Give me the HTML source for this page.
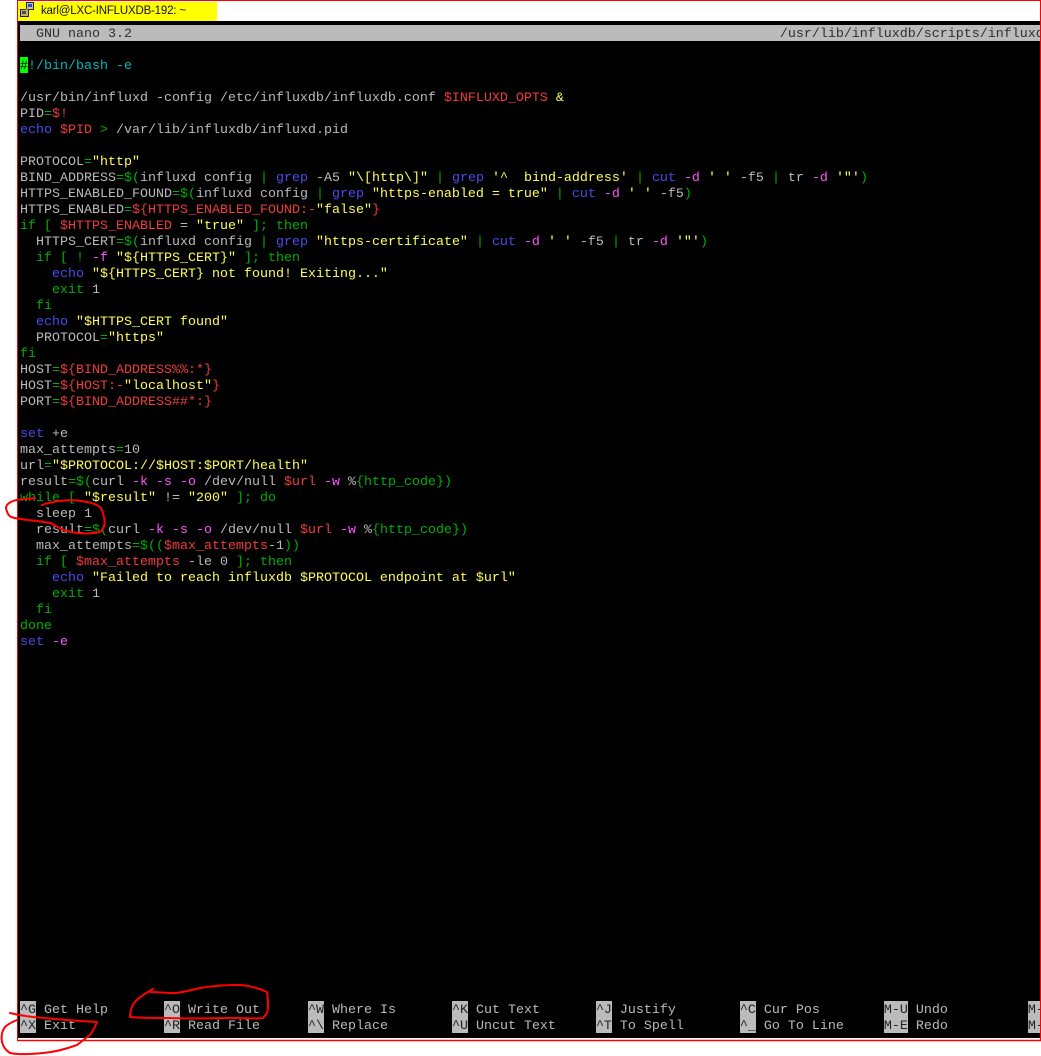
<!DOCTYPE html>
<html><head><meta charset="utf-8"><style>
html,body{margin:0;padding:0;background:#fff}
#p{position:relative;width:1041px;height:1056px;overflow:hidden;background:#fff}
#p>div{position:absolute}
#term{left:18px;top:21px;width:1022px;height:1017px;background:#000}
#yl{left:18px;top:2px;width:199px;height:19px;background:#ff0}
#tt{left:41px;top:2px;height:19px;font:11.5px/19px "Liberation Sans",sans-serif;letter-spacing:-.19px;color:#111;white-space:nowrap}
#bar{left:20px;top:25px;width:1020px;height:16px;background:#bbb}
#cursor{left:20px;top:57px;width:8px;height:16px;background:#00ff00}
.hk{background:#bbb;top:1001px;height:32px}
#code{left:20px;top:27px;width:1020px;height:1011px;overflow:hidden}
pre{margin:0;font:13.334px/16px "Liberation Mono",monospace;color:#bbb;white-space:pre}
i{font-style:normal}
.k{color:#2f2f2f}
.g{color:#00b000}.b{color:#4a4af0}.r{color:#f03c3c}.y{color:#ffff55}.m{color:#ff55ff}.c{color:#00bbbb}
.h{color:#222}
.cur{color:#000}
svg{position:absolute;left:0;top:0}
</style></head><body><div id="p">
<div id="term"></div>
<div id="yl"></div>
<div id="tt">karl@LXC-INFLUXDB-192: ~</div>
<div id="bar"></div>
<div id="cursor"></div>
<div class="hk" style="left:20px;width:16px"></div>
<div class="hk" style="left:164px;width:16px"></div>
<div class="hk" style="left:308px;width:16px"></div>
<div class="hk" style="left:452px;width:16px"></div>
<div class="hk" style="left:596px;width:16px"></div>
<div class="hk" style="left:740px;width:16px"></div>
<div class="hk" style="left:884px;width:24px"></div>
<div class="hk" style="left:1028px;width:12px"></div>
<div id="code"><pre><i class="k">  GNU nano 3.2                                                                                 /usr/lib/influxdb/scripts/influxd</i>

<i class="cur">#</i><i class="c">!/bin/bash -e</i>

/usr/bin/influxd -config /etc/influxdb/influxdb.conf <i class="r">$INFLUXD_OPTS</i> <i class="y">&amp;</i>
PID<i class="g">=</i><i class="r">$!</i>
<i class="b">echo</i> <i class="r">$PID</i> <i class="g">&gt;</i> /var/lib/influxdb/influxd.pid

PROTOCOL<i class="g">=</i><i class="y">"http"</i>
BIND_ADDRESS<i class="g">=$(</i>influxd config <i class="g">|</i> <i class="b">grep</i> -A5 <i class="y">"\[http\]"</i> <i class="g">|</i> <i class="b">grep</i> <i class="y">'^  bind-address'</i> <i class="g">|</i> <i class="b">cut</i> <i class="m">-d</i> <i class="y">' '</i> -f5 <i class="g">|</i> tr <i class="m">-d</i> <i class="y">'"'</i><i class="g">)</i>
HTTPS_ENABLED_FOUND<i class="g">=$(</i>influxd config <i class="g">|</i> <i class="b">grep</i> <i class="y">"https-enabled = true"</i> <i class="g">|</i> <i class="b">cut</i> <i class="m">-d</i> <i class="y">' '</i> -f5<i class="g">)</i>
HTTPS_ENABLED<i class="g">=</i><i class="r">${HTTPS_ENABLED_FOUND:-</i><i class="y">"false"</i><i class="r">}</i>
<i class="g">if [</i> <i class="r">$HTTPS_ENABLED</i> = <i class="y">"true"</i> <i class="g">]; then</i>
  HTTPS_CERT<i class="g">=$(</i>influxd config <i class="g">|</i> <i class="b">grep</i> <i class="y">"https-certificate"</i> <i class="g">|</i> <i class="b">cut</i> <i class="m">-d</i> <i class="y">' '</i> -f5 <i class="g">|</i> tr <i class="m">-d</i> <i class="y">'"'</i><i class="g">)</i>
  <i class="g">if [ !</i> <i class="m">-f</i> <i class="y">"${HTTPS_CERT}"</i> <i class="g">]; then</i>
    <i class="b">echo</i> <i class="y">"${HTTPS_CERT} not found! Exiting..."</i>
    <i class="g">exit</i> 1
  <i class="g">fi</i>
  <i class="b">echo</i> <i class="y">"$HTTPS_CERT found"</i>
  PROTOCOL<i class="g">=</i><i class="y">"https"</i>
<i class="g">fi</i>
HOST<i class="g">=</i><i class="r">${BIND_ADDRESS%%:*}</i>
HOST<i class="g">=</i><i class="r">${HOST:-</i><i class="y">"localhost"</i><i class="r">}</i>
PORT<i class="g">=</i><i class="r">${BIND_ADDRESS##*:}</i>

<i class="b">set</i> +e
max_attempts<i class="g">=</i>10
url<i class="g">=</i><i class="y">"$PROTOCOL://$HOST:$PORT/health"</i>
result<i class="g">=$(</i>curl <i class="m">-k</i> <i class="m">-s</i> <i class="m">-o</i> /dev/null <i class="r">$url</i> <i class="m">-w</i> %<i class="g">{http_code})</i>
<i class="g">while [</i> <i class="y">"$result"</i> != <i class="y">"200"</i> <i class="g">]; do</i>
  sleep 1
  result<i class="g">=$(</i>curl <i class="m">-k</i> <i class="m">-s</i> <i class="m">-o</i> /dev/null <i class="r">$url</i> <i class="m">-w</i> %<i class="g">{http_code})</i>
  max_attempts<i class="g">=$((</i><i class="r">$max_attempts</i>-1<i class="g">))</i>
  <i class="g">if [</i> <i class="r">$max_attempts</i> -le 0 <i class="g">]; then</i>
    <i class="b">echo</i> <i class="y">"Failed to reach influxdb $PROTOCOL endpoint at $url"</i>
    <i class="g">exit</i> 1
  <i class="g">fi</i>
<i class="g">done</i>
<i class="b">set</i> <i class="m">-e</i>
</pre></div>
<div style="left:20px;top:1003px;width:1020px;height:32px;overflow:hidden"><pre><i class="h">^G</i> Get Help       <i class="h">^O</i> Write Out      <i class="h">^W</i> Where Is       <i class="h">^K</i> Cut Text       <i class="h">^J</i> Justify        <i class="h">^C</i> Cur Pos        <i class="h">M-U</i> Undo          <i class="h">M-A</i>
<i class="h">^X</i> Exit           <i class="h">^R</i> Read File      <i class="h">^\</i> Replace        <i class="h">^U</i> Uncut Text     <i class="h">^T</i> To Spell       <i class="h">^_</i> Go To Line     <i class="h">M-E</i> Redo          <i class="h">M-6</i></pre></div>
<svg width="1041" height="1056" viewBox="0 0 1041 1056" fill="none">
<path d="M17 0.5H1041" stroke="#f00"/>
<path d="M17.5 0V1041" stroke="#f00"/>
<path d="M1040.5 0V1041" stroke="#f00"/>
<path d="M17 1040.5H1041" stroke="#f00" stroke-width="1.5"/>
<g stroke="#222" stroke-width="1">
<rect x="26.5" y="2.5" width="7" height="7" fill="#b9c0cc"/>
<rect x="28" y="4" width="4" height="3" fill="#2a50b0" stroke="none"/>
<rect x="20.5" y="9.5" width="8" height="7" fill="#c9b25a"/>
<rect x="22" y="11" width="4" height="3" fill="#3a4a70" stroke="none"/>
<path d="M26 10l3-2l2 1" stroke="#e8c820"/>
</g>
<g stroke="#f00" stroke-width="2" stroke-linecap="round" stroke-linejoin="round">
<path d="M35 498C28 499 18 499 13 501C8 503 6 505 6 508C7 513 9 516 11 517C20 520 35 520 50 523C56 525 60 530 67 531C75 533 85 534 92 533C98 533 101 532 102 530C105 526 105 522 104 517C103 512 102 509 100 507C96 504 92 503 87 502C78 500 68 500 60 501C52 502 47 503 42 505"/>
<path d="M153 989C146 993 138 998 134 1003C131 1008 130 1013 130 1017C142 1018 155 1018 167 1018C190 1019 212 1018 233 1018C245 1018 255 1019 263 1018C267 1014 268 1011 268 1007C268 1002 268 997 267 992C258 988 248 985 237 985C224 985 212 986 200 988C191 990 182 993 173 993C165 993 158 992 150 992"/>
<path d="M10 1013C18 1015 25 1016 33 1017C54 1019 76 1021 97 1022C95 1027 93 1031 90 1035C86 1038 81 1042 77 1045C66 1049 55 1052 43 1053C32 1054 20 1055 10 1053C5 1050 3 1046 2 1042C1 1036 2 1031 5 1027C8 1024 12 1022 17 1020"/>
</g>
</svg>
</div></body></html>
